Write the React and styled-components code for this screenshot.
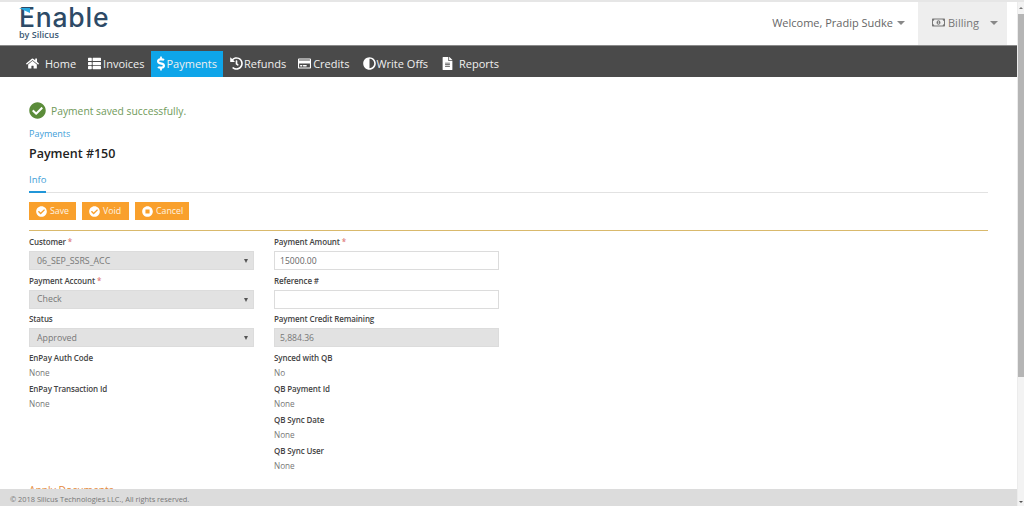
import React from 'react'
import styled, { createGlobalStyle } from 'styled-components'
import { FaHome, FaThList, FaDollarSign, FaHistory, FaRegCreditCard, FaAdjust, FaFileAlt, FaCheckCircle, FaRegMoneyBillAlt, FaStopCircle } from 'react-icons/fa'

const GlobalStyle = createGlobalStyle`
  html, body { margin: 0; padding: 0; height: 100%; overflow: hidden; background: #fff; }
  body { font-family: "Open Sans", "Liberation Sans", sans-serif; color: #555; }
  * { box-sizing: border-box; }
`

const navItems = [
  { label: 'Home', icon: <FaHome />, gap: 6, padding: '0 5px 2px 0' },
  { label: 'Invoices', icon: <FaThList />, gap: 2, padding: '0 6px 2px 7px' },
  { label: 'Payments', icon: <FaDollarSign />, gap: 2, iconWidth: 8, iconHeight: 15, active: true, padding: '0 6px 2px 6px' },
  { label: 'Refunds', icon: <FaHistory />, gap: 1, padding: '0 5px 2px 7px' },
  { label: 'Credits', icon: <FaRegCreditCard />, gap: 2, padding: '0 7px 2px 7px' },
  { label: 'Write Offs', icon: <FaAdjust />, gap: 0, padding: '0 6px 2px 7px' },
  { label: 'Reports', icon: <FaFileAlt />, gap: 5, padding: '0 0 2px 7px' },
]

const leftFields = [
  { label: 'Customer', required: true, select: '06_SEP_SSRS_ACC' },
  { label: 'Payment Account', required: true, select: 'Check' },
  { label: 'Status', select: 'Approved' },
  { label: 'EnPay Auth Code', text: 'None' },
  { label: 'EnPay Transaction Id', text: 'None' },
]

const rightFields = [
  { label: 'Payment Amount', required: true, input: '15000.00' },
  { label: 'Reference #', input: '' },
  { label: 'Payment Credit Remaining', readonly: '5,884.36' },
  { label: 'Synced with QB', text: 'No' },
  { label: 'QB Payment Id', text: 'None' },
  { label: 'QB Sync Date', text: 'None' },
  { label: 'QB Sync User', text: 'None' },
]

const Field = ({ field }) => (
  <FieldWrap>
    <Label>{field.label}{field.required && <Req> *</Req>}</Label>
    {field.select && <SelectBox>{field.select}<Caret /></SelectBox>}
    {field.input !== undefined && <InputBox>{field.input}</InputBox>}
    {field.readonly && <ReadonlyBox>{field.readonly}</ReadonlyBox>}
    {field.text && <Value>{field.text}</Value>}
  </FieldWrap>
)

export default function App() {
  return (
    <Page>
      <GlobalStyle />
      <Main>
        <Header>
          <Logo>
            <LogoWord>
              <svg width="11" height="5" viewBox="0 0 11 5"><path d="M0 0h11v5z" fill="#29a9e0" /></svg>
              Enable
            </LogoWord>
            <LogoSub>by Silicus</LogoSub>
          </Logo>
          <HeaderRight>
            <Welcome>Welcome, Pradip Sudke<DownCaret /></Welcome>
            <Billing><FaRegMoneyBillAlt />Billing<DownCaret $gap={8} /></Billing>
          </HeaderRight>
        </Header>
        <Nav>
          {navItems.map(item => (
            <NavItem
              key={item.label}
              $active={item.active}
              $gap={item.gap}
              $padding={item.padding}
              $iconWidth={item.iconWidth}
              $iconHeight={item.iconHeight}
            >
              {item.icon}{item.label}
            </NavItem>
          ))}
        </Nav>
        <Content>
          <Alert><FaCheckCircle />Payment saved successfully.</Alert>
          <Crumb>Payments</Crumb>
          <Title>Payment #150</Title>
          <Tabs><Tab>Info</Tab></Tabs>
          <Toolbar>
            <ActionButton><FaCheckCircle />Save</ActionButton>
            <ActionButton><FaCheckCircle />Void</ActionButton>
            <ActionButton><FaStopCircle />Cancel</ActionButton>
          </Toolbar>
          <FormGrid>
            <Column>{leftFields.map(f => <Field key={f.label} field={f} />)}</Column>
            <Column>{rightFields.map(f => <Field key={f.label} field={f} />)}</Column>
          </FormGrid>
          <SectionTitle>Apply Documents</SectionTitle>
        </Content>
        <Footer>© 2018 Silicus Technologies LLC., All rights reserved.</Footer>
      </Main>
      <Scrollbar><Thumb /></Scrollbar>
    </Page>
  )
}

const Page = styled.div`
  display: flex;
  width: 1024px;
  height: 506px;
  overflow: hidden;
  border-top: 2px solid #e6e6e6;
`

const Main = styled.div`
  position: relative;
  flex: 1;
  min-width: 0;
  overflow: hidden;
`

const Header = styled.header`
  display: flex;
  justify-content: space-between;
  height: 43px;
  padding: 0 10px 0 19px;
`

const Logo = styled.div`
  display: flex;
  flex-direction: column;
  padding-top: 3px;
`

const LogoWord = styled.div`
  position: relative;
  font-family: Inter, sans-serif;
  font-size: 26.5px;
  font-weight: 500;
  line-height: 25px;
  letter-spacing: 0.8px;
  color: #2d4a66;
  svg {
    position: absolute;
    left: 0;
    top: 3px;
  }
`

const LogoSub = styled.div`
  font-size: 9px;
  font-weight: 600;
  line-height: 10px;
  color: #3d5a75;
`

const HeaderRight = styled.div`
  display: flex;
  align-items: stretch;
`

const Welcome = styled.div`
  display: flex;
  align-items: center;
  padding: 0 13px 2px 0;
  font-size: 11px;
  color: #666;
`

const Billing = styled.div`
  display: flex;
  align-items: center;
  gap: 3px;
  width: 89px;
  padding: 0 0 2px 14px;
  font-size: 11px;
  color: #777;
  background: #eeeeee;
  svg { font-size: 13px; }
`

const DownCaret = styled.span`
  display: inline-block;
  margin-left: ${p => p.$gap || 4}px;
  border-left: 4px solid transparent;
  border-right: 4px solid transparent;
  border-top: 4px solid #888;
`

const Nav = styled.nav`
  display: flex;
  align-items: stretch;
  height: 32px;
  padding-left: 26px;
  padding-top: 5px;
  background: #4a4a4a;
  border-top: 1px solid #8a8a8a;
`

const NavItem = styled.div`
  display: flex;
  align-items: center;
  gap: ${p => p.$gap}px;
  padding: ${p => p.$padding};
  font-size: 11px;
  color: #f0f0f0;
  background: ${p => (p.$active ? '#0ea5e9' : 'transparent')};
  svg {
    width: ${p => p.$iconWidth || 13}px;
    height: ${p => p.$iconHeight || 13}px;
    color: #fff;
  }
`

const Content = styled.main`
  padding: 25px 29px 0;
`

const Alert = styled.div`
  display: flex;
  align-items: center;
  gap: 5px;
  height: 17px;
  font-size: 10.3px;
  color: #6f9a5a;
  svg { font-size: 17px; color: #5b8c3a; }
`

const Crumb = styled.div`
  margin-top: 8px;
  font-size: 9px;
  line-height: 13px;
  color: #3fa0d8;
`

const Title = styled.h1`
  margin: 5px 0 0;
  font-size: 12.5px;
  font-weight: 600;
  line-height: 17px;
  color: #222;
`

const Tabs = styled.div`
  display: flex;
  margin-top: 11px;
  border-bottom: 1px solid #e2e2e2;
`

const Tab = styled.div`
  width: 17px;
  height: 20px;
  margin-bottom: -1px;
  font-size: 9.5px;
  line-height: 13px;
  color: #3fa0d8;
  border-bottom: 2px solid #2196d8;
`

const Toolbar = styled.div`
  display: flex;
  gap: 6px;
  padding: 9px 0 10px;
  border-bottom: 1px solid #d9b96c;
`

const ActionButton = styled.div`
  display: flex;
  align-items: center;
  gap: 3px;
  min-width: 47px;
  height: 18px;
  padding: 0 6px 0 7px;
  font-size: 8.8px;
  color: #fdf3e2;
  background: #f9a02c;
  svg { font-size: 11px; color: #fff; }
`

const FormGrid = styled.div`
  display: grid;
  grid-template-columns: 225px 225px;
  column-gap: 20px;
  margin-top: 4px;
`

const Column = styled.div`
  display: flex;
  flex-direction: column;
`

const FieldWrap = styled.div`
  display: flex;
  flex-direction: column;
`

const Label = styled.div`
  height: 16px;
  font-size: 8px;
  font-weight: 600;
  line-height: 13px;
  letter-spacing: -0.12px;
  color: #444;
`

const Req = styled.span`
  color: #e08080;
`

const SelectBox = styled.div`
  position: relative;
  display: flex;
  align-items: center;
  height: 19px;
  margin-bottom: 3.5px;
  padding-left: 7px;
  font-size: 8.8px;
  color: #777;
  background: #e2e2e2;
  border: 1px solid #dcdcdc;
`

const Caret = styled.span`
  position: absolute;
  right: 5px;
  top: 7px;
  border-left: 2px solid transparent;
  border-right: 2px solid transparent;
  border-top: 4px solid #555;
`

const InputBox = styled.div`
  display: flex;
  align-items: center;
  height: 19px;
  margin-bottom: 3.5px;
  padding-left: 5px;
  font-size: 8.6px;
  color: #666;
  background: #fff;
  border: 1px solid #dcdcdc;
`

const ReadonlyBox = styled(InputBox)`
  color: #777;
  background: #e2e2e2;
`

const Value = styled.div`
  height: 15px;
  margin-top: -2px;
  padding-bottom: 2px;
  box-sizing: content-box;
  font-size: 8.2px;
  line-height: 15px;
  color: #777;
`

const SectionTitle = styled.div`
  margin-top: 8px;
  font-size: 10.3px;
  color: #e58a3a;
`

const Footer = styled.footer`
  position: absolute;
  left: 0;
  right: 0;
  bottom: 0;
  height: 17px;
  padding-left: 10px;
  font-size: 7.4px;
  line-height: 20px;
  color: #777;
  background: #dcdcdc;
`

const Scrollbar = styled.div`
  position: relative;
  width: 7px;
  padding-top: 12px;
  background: #f3f3f3;
  border-left: 1px solid #ececec;
  &::before, &::after {
    content: '';
    position: absolute;
    left: 1px;
    border-left: 2px solid transparent;
    border-right: 2px solid transparent;
  }
  &::before { top: 5px; border-bottom: 2px solid #777; }
  &::after { bottom: 3px; border-top: 2px solid #555; }
`

const Thumb = styled.div`
  height: 363px;
  background: #b5b5b5;
`
